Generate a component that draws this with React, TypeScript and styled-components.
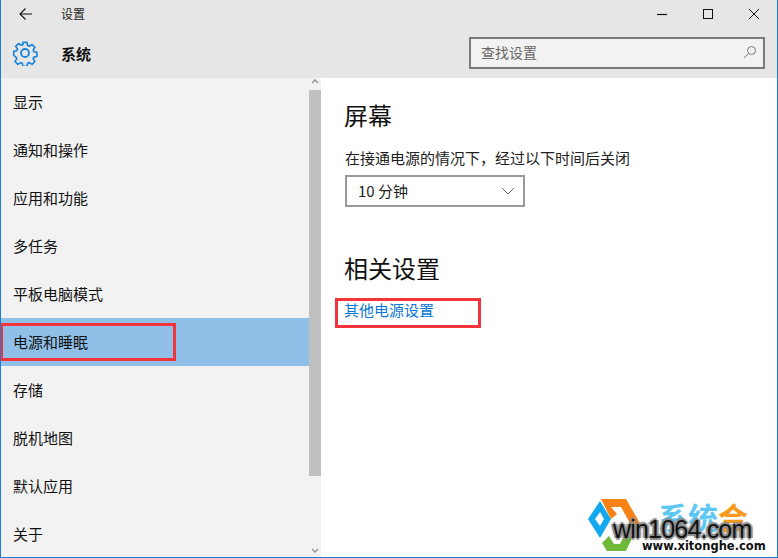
import styled, { createGlobalStyle } from "styled-components";

const GlobalStyle = createGlobalStyle`
  html, body {
    margin: 0;
    padding: 0;
    background: #fff;
  }
  body {
    font-family: "Noto Sans CJK SC", "Liberation Sans", sans-serif;
  }
`;

const menu = ["显示", "通知和操作", "应用和功能", "多任务", "平板电脑模式", "电源和睡眠", "存储", "脱机地图", "默认应用", "关于"];

const BackIcon = () => (
  <svg width="16" height="14" viewBox="0 0 16 14" fill="none" stroke="#111" strokeWidth="1.1">
    <path d="M2 7H14M7.5 1.5L2 7L7.5 12.5" />
  </svg>
);

const GearIcon = () => (
  <svg width="26" height="26" viewBox="0 0 26 26" fill="none" stroke="#1a84dc" strokeWidth="1.8" strokeLinejoin="round">
    <path d="M10.8 1.5h4.4l.7 3.4 1.9.8 2.9-1.9 3.1 3.1-1.9 2.9.8 1.9 3.3.7v4.4l-3.3.7-.8 1.9 1.9 2.9-3.1 3.1-2.9-1.9-1.9.8-.7 3.3h-4.4l-.7-3.3-1.9-.8-2.9 1.9-3.1-3.1 1.9-2.9-.8-1.9L.8 15.7v-4.4l3.3-.7.8-1.9L3 5.8l3.1-3.1L9 4.6l1.9-.8z" transform="translate(1 1) scale(.92)" />
    <circle cx="13" cy="13" r="4" />
  </svg>
);

const MinimizeIcon = () => (
  <svg width="12" height="12" viewBox="0 0 12 12" fill="none" stroke="#111" strokeWidth="1.2">
    <path d="M1 6.5H11" />
  </svg>
);

const MaximizeIcon = () => (
  <svg width="12" height="12" viewBox="0 0 12 12" fill="none" stroke="#111" strokeWidth="1">
    <rect x="1.5" y="1.5" width="9" height="9" />
  </svg>
);

const CloseIcon = () => (
  <svg width="12" height="12" viewBox="0 0 12 12" fill="none" stroke="#111" strokeWidth="1">
    <path d="M1 1L11 11M11 1L1 11" />
  </svg>
);

const SearchIcon = () => (
  <svg width="14" height="14" viewBox="0 0 14 14" fill="none" stroke="#777" strokeWidth="1">
    <circle cx="8.5" cy="5.5" r="4" />
    <path d="M5.5 8.5L1 13" />
  </svg>
);

const ChevronIcon = () => (
  <svg width="14" height="8" viewBox="0 0 14 8" fill="none" stroke="#666" strokeWidth="1">
    <path d="M1 1L7 7L13 1" />
  </svg>
);

const ScrollChevron = ({ up }: { up?: boolean }) => (
  <svg width="8" height="5" viewBox="0 0 8 5" fill="none" stroke="#999" strokeWidth="1.5">
    <path d={up ? "M1 4L4 1L7 4" : "M1 1L4 4L7 1"} />
  </svg>
);

const Logo = () => (
  <svg width="54" height="60" viewBox="0 0 54 60">
    <path d="M0 24L12 6L23 24L12 43Z M7 24L12 31L16 24L12 17Z" fill="#12a8ee" fillRule="evenodd" />
    <path d="M13 4H38L53 30H43L33 12H23L29 19L23 24Z" fill="#f98216" />
    <path d="M14 48L21 41L26 49H32L36 41H45L38 56H19Z" fill="#6eb83a" />
  </svg>
);

export default function App() {
  return (
    <>
      <GlobalStyle />
      <Window>
        <Header>
          <TitleRow>
            <BackButton>
              <BackIcon />
            </BackButton>
            <WindowTitle>设置</WindowTitle>
            <Controls>
              <ControlButton>
                <MinimizeIcon />
              </ControlButton>
              <ControlButton>
                <MaximizeIcon />
              </ControlButton>
              <ControlButton>
                <CloseIcon />
              </ControlButton>
            </Controls>
          </TitleRow>
          <SectionRow>
            <GearSlot>
              <GearIcon />
            </GearSlot>
            <SectionTitle>系统</SectionTitle>
            <SearchBox>
              <SearchHint>查找设置</SearchHint>
              <SearchIcon />
            </SearchBox>
          </SectionRow>
        </Header>
        <Body>
          <Sidebar>
            <Menu>
              {menu.map((item) => (
                <MenuItem key={item} $active={item === "电源和睡眠"}>
                  {item}
                </MenuItem>
              ))}
            </Menu>
            <ScrollTrack>
              <ScrollArrow>
                <ScrollChevron up />
              </ScrollArrow>
              <ScrollThumb />
              <ScrollEnd>
                <ScrollChevron />
              </ScrollEnd>
            </ScrollTrack>
          </Sidebar>
          <Content>
            <Heading>屏幕</Heading>
            <Label>在接通电源的情况下，经过以下时间后关闭</Label>
            <Select>
              <SelectValue>10 分钟</SelectValue>
              <ChevronIcon />
            </Select>
            <RelatedHeading>相关设置</RelatedHeading>
            <Link>其他电源设置</Link>
          </Content>
        </Body>
        <SideMark />
        <LinkMark />
        <Watermark>
          <Logo />
          <BrandText>
            <BrandCn>
              系统<BrandAccent>合</BrandAccent>
            </BrandCn>
            <BrandMain>win1064.com</BrandMain>
            <BrandUrl>www.xitonghe.com</BrandUrl>
          </BrandText>
        </Watermark>
      </Window>
    </>
  );
}

const Window = styled.div`
  position: relative;
  width: 778px;
  height: 558px;
  box-sizing: border-box;
  display: flex;
  flex-direction: column;
  overflow: hidden;
  border-left: 1px solid #1a7fd4;
  border-right: 1px solid #1a7fd4;
  border-bottom: 1px solid #1a7fd4;
  background: #fff;
`;

const Header = styled.header`
  height: 78px;
  flex: none;
  background: #e6e6e6;
  display: flex;
  flex-direction: column;
`;

const TitleRow = styled.div`
  height: 28px;
  display: flex;
  align-items: center;
`;

const BackButton = styled.div`
  width: 48px;
  padding-left: 17px;
  box-sizing: border-box;
  display: flex;
  align-items: center;
`;

const WindowTitle = styled.div`
  margin-left: 12px;
  font-size: 12px;
  line-height: 16px;
  color: #222;
`;

const Controls = styled.div`
  margin-left: auto;
  display: flex;
`;

const ControlButton = styled.div`
  width: 46px;
  height: 28px;
  display: flex;
  align-items: center;
  justify-content: center;
`;

const SectionRow = styled.div`
  flex: 1;
  display: flex;
  align-items: center;
  padding: 0 12px 0 11px;
`;

const GearSlot = styled.div`
  width: 49px;
  height: 26px;
`;

const SectionTitle = styled.div`
  font-size: 15px;
  font-weight: 700;
  color: #111;
`;

const SearchBox = styled.div`
  margin-left: auto;
  width: 296px;
  height: 32px;
  box-sizing: border-box;
  border: 2px solid #7a7a7a;
  background: #f2f2f2;
  display: flex;
  align-items: center;
  justify-content: space-between;
  padding: 0 6px 2px 10px;
`;

const SearchHint = styled.span`
  font-size: 14px;
  color: #666;
`;

const Body = styled.div`
  flex: 1;
  min-height: 0;
  display: flex;
`;

const Sidebar = styled.nav`
  width: 320px;
  flex: none;
  background: #f2f2f2;
  display: flex;
`;

const Menu = styled.div`
  flex: 1;
  display: flex;
  flex-direction: column;
`;

const MenuItem = styled.div<{ $active: boolean }>`
  height: 48px;
  flex: none;
  box-sizing: border-box;
  display: flex;
  align-items: center;
  padding: 0 0 2px 12px;
  font-size: 15px;
  color: #111;
  background: ${(props) => (props.$active ? "#90c0e8" : "transparent")};
`;

const ScrollTrack = styled.div`
  width: 12px;
  display: flex;
  flex-direction: column;
`;

const ScrollArrow = styled.div`
  height: 12px;
  box-sizing: border-box;
  padding-top: 1px;
  display: flex;
  justify-content: center;
`;

const ScrollThumb = styled.div`
  height: 386px;
  background: #c0c0c0;
`;

const ScrollEnd = styled(ScrollArrow)`
  margin-top: auto;
  height: 9px;
  padding-top: 0;
`;

const Content = styled.main`
  flex: 1;
  padding: 20px 0 0 24px;
  display: flex;
  flex-direction: column;
  align-items: flex-start;
`;

const Heading = styled.h2`
  margin: 0 0 0 -1px;
  font-size: 24px;
  line-height: 34px;
  font-weight: 400;
  color: #111;
`;

const RelatedHeading = styled(Heading)`
  margin-top: 44px;
`;

const Label = styled.div`
  margin-top: 15px;
  font-size: 15px;
  line-height: 22px;
  color: #222;
`;

const Select = styled.div`
  margin-top: 6px;
  width: 180px;
  height: 32px;
  box-sizing: border-box;
  border: 2px solid #999;
  display: flex;
  align-items: center;
  justify-content: space-between;
  padding: 0 8px 0 11px;
  font-size: 15px;
  color: #222;
`;

const SelectValue = styled.span`
  margin-bottom: 2px;
`;

const Link = styled.a`
  margin: 14px 0 0 -1px;
  font-size: 15px;
  line-height: 22px;
  color: #0a78d2;
`;

const SideMark = styled.div`
  position: absolute;
  left: -1px;
  top: 323px;
  width: 176px;
  height: 38px;
  box-sizing: border-box;
  border: 3px solid #f5333a;
`;

const LinkMark = styled.div`
  position: absolute;
  left: 334px;
  top: 298px;
  width: 146px;
  height: 30px;
  box-sizing: border-box;
  border: 3px solid #f5333a;
`;

const Watermark = styled.div`
  position: absolute;
  left: 587px;
  top: 495px;
  display: flex;
`;

const BrandText = styled.div`
  position: relative;
  width: 136px;
`;

const BrandCn = styled.div`
  position: absolute;
  left: 16px;
  top: 6px;
  font-size: 30px;
  line-height: 30px;
  font-weight: 700;
  color: #5ec8f5;
  white-space: nowrap;
`;

const BrandAccent = styled.span`
  color: #f79a1e;
`;

const BrandMain = styled.div`
  position: absolute;
  left: -29px;
  top: 19px;
  font-family: "Liberation Sans", sans-serif;
  font-size: 25px;
  line-height: 30px;
  letter-spacing: -0.8px;
  color: #111;
  white-space: nowrap;
  text-shadow: 2px 0 1px #8a8a8a, -2px 0 1px #8a8a8a, 0 2px 1px #8a8a8a, 0 -2px 1px #8a8a8a, 0 0 3px #8a8a8a;
`;

const BrandUrl = styled.div`
  position: absolute;
  left: 0;
  top: 45px;
  font-family: "DejaVu Sans", sans-serif;
  font-size: 11.5px;
  line-height: 13px;
  font-weight: 700;
  color: #111;
  white-space: nowrap;
`;
